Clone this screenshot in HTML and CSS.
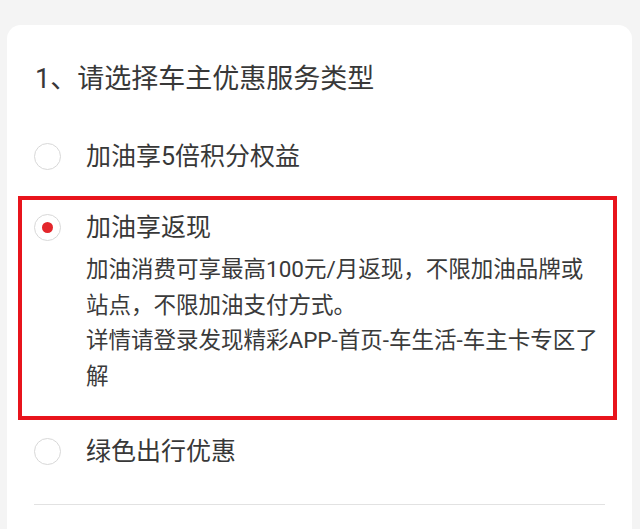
FILE: index.html
```html
<!DOCTYPE html>
<html lang="zh-CN">
<head>
<meta charset="utf-8">
<title>车主优惠服务类型</title>
<link rel="stylesheet" href="styles.css">
</head>
<body>
<main class="card">
  <h1 class="question">1、请选择车主优惠服务类型</h1>
  <div class="options">
    <div class="option">
      <span class="radio"></span>
      <div class="option-body">
        <div class="option-title">加油享5倍积分权益</div>
      </div>
    </div>
    <div class="option is-selected">
      <span class="radio"><span class="radio-dot"></span></span>
      <div class="option-body">
        <div class="option-title">加油享返现</div>
        <p class="option-desc">加油消费可享最高100元/月返现，不限加油品牌或站点，不限加油支付方式。<br>详情请登录发现精彩APP-首页-车生活-车主卡专区了解</p>
      </div>
    </div>
    <div class="option">
      <span class="radio"></span>
      <div class="option-body">
        <div class="option-title">绿色出行优惠</div>
      </div>
    </div>
  </div>
  <hr class="divider">
</main>
</body>
</html>
```
FILE: styles.css
```css
html, body {
  margin: 0;
  padding: 0;
}
body {
  background: #f4f4f4;
  height: 529px;
  overflow: hidden;
  font-family: Roboto, "Noto Sans CJK SC", "Noto Sans", sans-serif;
  font-weight: 400;
  color: #383838;
}
.card {
  margin: 25px 8px 0 7px;
  height: 504px;
  box-sizing: border-box;
  background: #ffffff;
  border-radius: 14px 14px 0 0;
  padding: 36px 15px 0 11px;
}
.question {
  margin: 0 0 28px 17px;
  font-size: 27px;
  line-height: 36px;
  font-weight: 400;
  color: #383838;
}
.options {
  display: flex;
  flex-direction: column;
}
.option {
  display: flex;
  align-items: flex-start;
  gap: 25px;
  border: 4px solid transparent;
  padding: 10px 11px 10px 12px;
}
.option.is-selected {
  border-color: #e8141c;
  margin-top: 7px;
}
.radio {
  flex: none;
  width: 27px;
  height: 27px;
  margin-top: 4px;
  box-sizing: border-box;
  border: 1.5px solid #d8d8d8;
  border-radius: 50%;
  background: #ffffff;
  display: flex;
  align-items: center;
  justify-content: center;
}
.radio-dot {
  width: 11px;
  height: 11px;
  border-radius: 50%;
  background: #e3262b;
}
.option-body {
  flex: 1;
  min-width: 0;
}
.option-title {
  font-size: 25px;
  line-height: 36px;
  color: #383838;
}
.option-desc {
  margin: 6px 0 11.5px;
  font-size: 22.5px;
  line-height: 35.5px;
  color: #3a3a3a;
}
.divider {
  margin: 20px 12px 0 16px;
  border: 0;
  border-top: 1.5px solid #e2e2e2;
  height: 0;
}
```
